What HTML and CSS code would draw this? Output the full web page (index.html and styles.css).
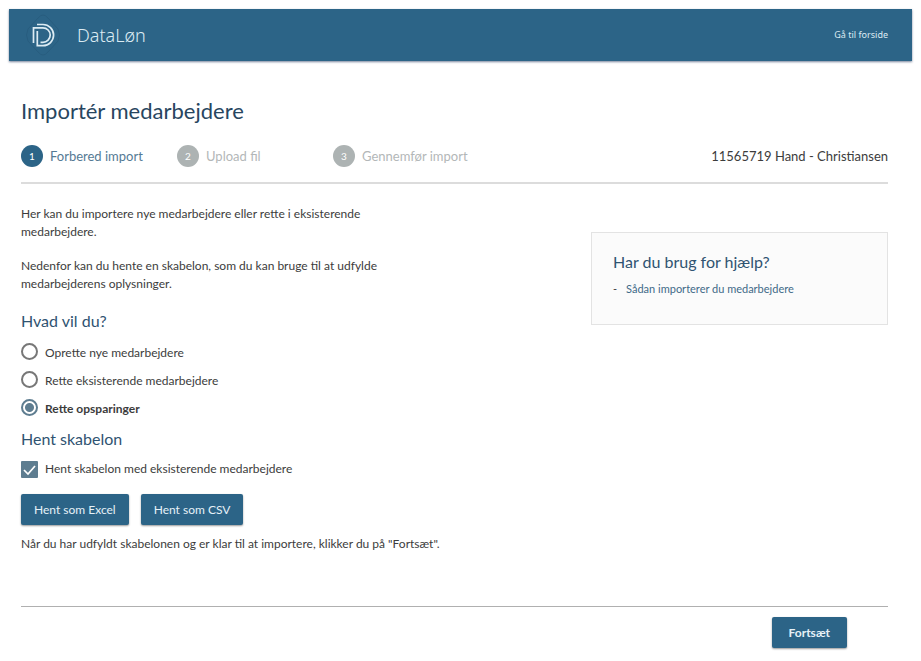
FILE: index.html
```
<!DOCTYPE html>
<html lang="da">
<head>
    <meta charset="UTF-8">
    <meta name="viewport" content="width=device-width, initial-scale=1.0">
    <title>DataLøn - Importér medarbejdere</title>
    <link rel="stylesheet" href="styles.css">
</head>
<body>
    <header class="topbar">
        <svg class="logo" viewBox="0 0 44 44" width="44" height="44" aria-hidden="true">
            <path d="M17 5 Q22 -1 27 5 L37 16 Q40 22 37 28 L27 39 Q22 45 17 39 L7 28 Q4 22 7 16 Z" fill="none" stroke="#285d7f" stroke-width="1"/>
            <path d="M16 11.5 H22 A10.6 10.6 0 0 1 22 32.7 H16.3 V18" fill="none" stroke="#dcebf3" stroke-width="1.7"/>
            <path d="M12.5 30 V14.9 H22 A7.2 7.2 0 0 1 22 29.3 H19.5" fill="none" stroke="#dcebf3" stroke-width="1.7"/>
        </svg>
        <span class="brand">DataLøn</span>
        <a class="home-link" href="#">Gå til forside</a>
    </header>

    <main class="page">
        <h1>Importér medarbejdere</h1>

        <div class="progress">
            <ol class="steps">
                <li class="step active"><span class="step-number">1</span>Forbered import</li>
                <li class="step"><span class="step-number">2</span>Upload fil</li>
                <li class="step"><span class="step-number">3</span>Gennemfør import</li>
            </ol>
            <span class="company">11565719 Hand - Christiansen</span>
        </div>

        <div class="content">
            <form class="import-form" id="importForm">
                <div class="intro">
                    <p>Her kan du importere nye medarbejdere eller rette i eksisterende medarbejdere.</p>
                    <p>Nedenfor kan du hente en skabelon, som du kan bruge til at udfylde medarbejderens oplysninger.</p>
                </div>

                <h2 id="actionTitle">Hvad vil du?</h2>
                <div class="options" role="radiogroup" aria-labelledby="actionTitle">
                    <label class="option"><input type="radio" name="action" value="create"><span>Oprette nye medarbejdere</span></label>
                    <label class="option"><input type="radio" name="action" value="edit"><span>Rette eksisterende medarbejdere</span></label>
                    <label class="option"><input type="radio" name="action" value="savings" checked><span>Rette opsparinger</span></label>
                </div>

                <h2>Hent skabelon</h2>
                <label class="option template-option"><input type="checkbox" name="existing" checked><span>Hent skabelon med eksisterende medarbejdere</span></label>

                <div class="buttons">
                    <button type="button">Hent som Excel</button>
                    <button type="button">Hent som CSV</button>
                </div>
                <p>Når du har udfyldt skabelonen og er klar til at importere, klikker du på "Fortsæt".</p>
            </form>

            <aside class="help">
                <h2>Har du brug for hjælp?</h2>
                <ul>
                    <li><a href="#">Sådan importerer du medarbejdere</a></li>
                </ul>
            </aside>
        </div>

        <footer class="actions">
            <button type="submit" form="importForm" class="next">Fortsæt</button>
        </footer>
    </main>
</body>
</html>
```
FILE: styles.css
```
* {
    box-sizing: border-box;
}
body {
    margin: 0;
    padding: 9px;
    background: #fff;
    font-family: Lato, sans-serif;
    font-size: 12px;
    line-height: 18px;
    color: #3c3c3c;
}
h1, h2, p, ul, ol {
    margin: 0;
    padding: 0;
    font-weight: 400;
}
ul, ol {
    list-style: none;
}
a {
    color: #3f6a88;
    text-decoration: none;
}
.topbar {
    display: flex;
    align-items: center;
    height: 52px;
    padding: 0 24px 0 12px;
    background: #2c6487;
    box-shadow: 0 1px 2px rgba(30, 50, 90, 0.6);
    color: #dcebf3;
}
.brand {
    margin-left: 12px;
    font-family: "Noto Sans", sans-serif;
    font-size: 18px;
    font-weight: 300;
}
.home-link {
    margin-left: auto;
    font-family: "Noto Sans", sans-serif;
    font-size: 9px;
    color: #dcebf3;
}
.page {
    padding: 34px 24px 0 12px;
}
h1 {
    font-size: 22px;
    line-height: 32px;
    color: #28465f;
}
h2 {
    font-size: 16px;
    line-height: 24px;
    color: #2f5371;
}
.progress {
    display: flex;
    align-items: center;
    justify-content: space-between;
    margin-top: 18px;
    padding-bottom: 15px;
    border-bottom: 2px solid #dcdcdc;
}
.steps {
    display: flex;
}
.step {
    display: flex;
    align-items: center;
    gap: 7px;
    width: 156px;
    font-size: 13px;
    line-height: 22px;
    white-space: nowrap;
    color: #b3b7b8;
}
.step-number {
    width: 22px;
    height: 22px;
    border-radius: 50%;
    background: #adb3b3;
    color: #fff;
    font-size: 10px;
    text-align: center;
}
.active {
    color: #557a94;
}
.active .step-number {
    background: #2c6487;
}
.company {
    font-size: 13px;
    color: #3c3c3c;
}
.content {
    display: flex;
    align-items: flex-start;
    justify-content: space-between;
    padding-top: 21px;
}
.intro {
    max-width: 360px;
}
.intro p {
    margin-bottom: 16px;
}
.options {
    margin: 4px 0 6px;
}
.options span {
    padding-top: 3px;
}
.option {
    display: flex;
    align-items: center;
    gap: 7px;
    height: 28px;
}
.option input {
    appearance: none;
    flex: none;
    width: 17px;
    height: 17px;
    margin: 0;
}
.option input[type="radio"] {
    border: 2px solid #777;
    border-radius: 50%;
}
.option input[type="radio"]:checked {
    border-color: #5e7d90;
    background: radial-gradient(circle, #5e7d90 4px, #fff 5px);
}
.option input[type="radio"]:checked + span {
    font-weight: 700;
}
.option input[type="checkbox"]:checked {
    border-radius: 1px;
    background: #5e7d90 url("data:image/svg+xml,%3Csvg xmlns='http://www.w3.org/2000/svg' viewBox='0 0 17 17'%3E%3Cpath d='M3 9l4 4 7-8' fill='none' stroke='white' stroke-width='1.7'/%3E%3C/svg%3E");
}
.template-option {
    margin-top: 4px;
}
.buttons {
    display: flex;
    gap: 12px;
    margin: 11px 0 10px;
}
button {
    height: 31px;
    padding: 0 13px;
    border: none;
    border-radius: 2px;
    background: #2c6487;
    box-shadow: 0 1px 2px rgba(0, 0, 0, 0.4);
    color: #e6f1f7;
    font-family: inherit;
    font-size: 12px;
    cursor: pointer;
}
.help {
    flex: 0 0 297px;
    min-height: 93px;
    margin-top: 27px;
    padding: 17px 21px;
    border: 1px solid #e3e3e3;
    background: #fbfbfb;
}
.help li {
    display: flex;
    gap: 9px;
    margin-top: 6px;
    font-size: 11px;
}
.help li::before {
    content: "-";
}
.actions {
    display: flex;
    justify-content: flex-end;
    margin-top: 53px;
    padding: 10px 41px 0 0;
    border-top: 1px solid #b0b0b0;
}
.next {
    padding: 0 17px;
    font-weight: 700;
}
```
